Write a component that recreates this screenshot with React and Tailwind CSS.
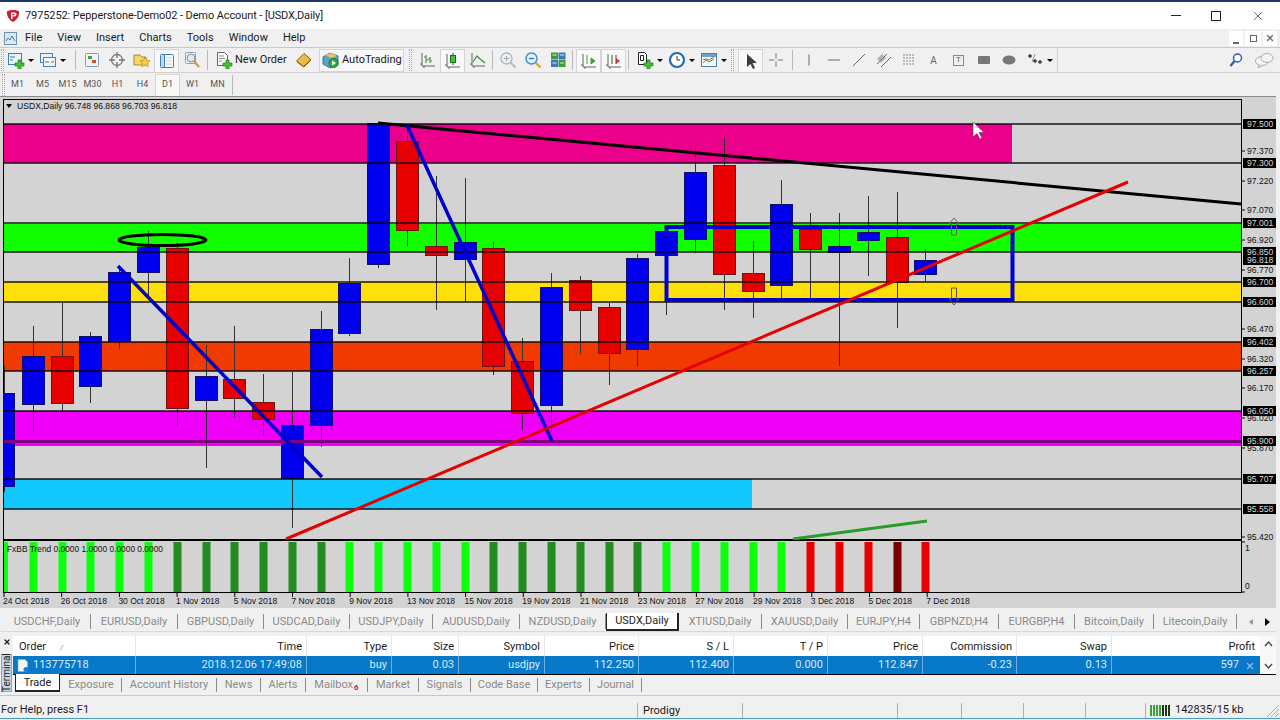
import React from 'react';
import { X } from 'lucide-react';

const B = 'blue';
const R = 'red';

// [x, color, wickTop, bodyTop, bodyBottom, wickBottom]
const candles = [
  [4, B, 366, 393, 486, 492],
  [33, B, 326, 356, 404, 432],
  [62, R, 303, 356, 403, 411],
  [90, B, 332, 336, 386, 403],
  [119, B, 267, 272, 341, 349],
  [148, B, 231, 247, 272, 297],
  [177, R, 243, 248, 408, 426],
  [206, B, 345, 376, 400, 468],
  [234, R, 326, 379, 398, 417],
  [263, R, 374, 402, 419, 436],
  [292, B, 372, 425, 478, 528],
  [321, B, 311, 329, 425, 447],
  [349, B, 258, 283, 333, 336],
  [378, B, 122, 123, 264, 268],
  [407, R, 125, 141, 230, 246],
  [436, R, 176, 246, 255, 310],
  [465, B, 178, 242, 259, 302],
  [493, R, 242, 248, 366, 375],
  [522, R, 338, 361, 413, 430],
  [551, B, 273, 287, 405, 432],
  [580, R, 276, 280, 310, 354],
  [609, R, 303, 307, 353, 385],
  [637, B, 254, 258, 349, 367],
  [666, B, 230, 231, 255, 315],
  [695, B, 146, 172, 239, 253],
  [724, R, 138, 165, 274, 310],
  [753, R, 241, 273, 291, 318],
  [781, B, 180, 204, 285, 298],
  [810, R, 213, 229, 249, 298],
  [839, B, 213, 246, 252, 366],
  [868, B, 196, 232, 240, 276],
  [897, R, 192, 237, 282, 328],
  [925, B, 249, 260, 274, 282],
];

const trendBars = [
  [5, 'l'], [33, 'l'], [62, 'l'], [90, 'l'], [119, 'l'], [148, 'l'],
  [177, 'd'], [206, 'd'], [234, 'd'], [263, 'd'], [292, 'd'], [321, 'd'],
  [349, 'l'], [378, 'l'], [407, 'l'], [436, 'l'], [465, 'l'],
  [493, 'd'], [522, 'd'], [551, 'd'], [580, 'd'], [609, 'd'], [637, 'd'],
  [666, 'l'], [695, 'l'], [724, 'l'], [753, 'l'], [781, 'l'],
  [810, 'r'], [839, 'r'], [868, 'r'], [897, 'm'], [925, 'r'],
];
const barColors = { l: '#0cff0c', d: '#228b22', r: '#e60000', m: '#7a0000' };

const dates = [
  '24 Oct 2018', '26 Oct 2018', '30 Oct 2018', '1 Nov 2018', '5 Nov 2018', '7 Nov 2018',
  '9 Nov 2018', '13 Nov 2018', '15 Nov 2018', '19 Nov 2018', '21 Nov 2018', '23 Nov 2018',
  '27 Nov 2018', '29 Nov 2018', '3 Dec 2018', '5 Dec 2018', '7 Dec 2018',
];

const plainPrices = [
  ['97.370', 151], ['97.220', 181], ['97.070', 210], ['96.920', 240], ['96.770', 270],
  ['96.470', 329], ['96.320', 359], ['96.170', 388], ['96.020', 418], ['95.870', 448], ['95.420', 537],
];
const boxedPrices = [
  ['97.500', 124], ['97.300', 163], ['97.001', 223], ['96.850', 252], ['96.818', 260], ['96.700', 282],
  ['96.600', 302], ['96.402', 342], ['96.257', 371], ['96.050', 411], ['95.900', 441], ['95.707', 479], ['95.558', 509],
];
const hLines = [124, 163, 223, 252, 282, 302, 342, 371, 411, 479, 509];

const Chart = () => (
  <svg width="1276" height="512" viewBox="0 97 1276 512" className="block" fontFamily="'Liberation Sans', sans-serif">
    <rect x="3.5" y="99.5" width="1238" height="440" fill="none" stroke="#000" />
    <text x="17" y="109" fontSize="8.6" fill="#111">USDX,Daily  96.748 96.868 96.703 96.818</text>
    <path d="M6 104h6l-3 4z" fill="#000" />

    {/* zones */}
    <rect x="4" y="124" width="1008" height="39" fill="#ea008b" />
    <rect x="4" y="224" width="1237" height="28" fill="#12ff00" />
    <rect x="4" y="282" width="1237" height="20" fill="#ffdf0a" />
    <rect x="4" y="342" width="1237" height="29" fill="#f03a00" />
    <rect x="4" y="411" width="1237" height="35" fill="#ee00f8" />
    <rect x="4" y="479" width="748" height="30" fill="#10c8fb" />

    {candles.map(([x, color, wt, bt, bb, wb]) => (
      <g key={x}>
        <line x1={x + 0.5} x2={x + 0.5} y1={wt} y2={wb} stroke="#333" />
        <rect
          x={x === 4 ? 3.5 : x - 10.5}
          y={bt + 0.5}
          width={x === 4 ? 11 : 22}
          height={bb - bt}
          fill={color === B ? '#0000ee' : '#e60000'}
          stroke={color === B ? '#10106a' : '#6e1414'}
        />
      </g>
    ))}

    {hLines.map((y) => (
      <line key={y} x1="4" x2="1241" y1={y} y2={y} stroke="#000" strokeWidth="1.5" opacity="0.9" />
    ))}
    <line x1="4" x2="1241" y1="441.5" y2="441.5" stroke="#80007f" strokeWidth="3" />

    {/* drawn objects */}
    <ellipse cx="162.5" cy="240" rx="43.5" ry="5.5" fill="none" stroke="#000" strokeWidth="3" />
    <line x1="378" y1="123" x2="1241" y2="204" stroke="#000" strokeWidth="3" />
    <line x1="118" y1="266" x2="322" y2="477" stroke="#0000c8" strokeWidth="3.5" />
    <line x1="407" y1="125" x2="552" y2="441" stroke="#0000c8" strokeWidth="3.5" />
    <rect x="666.5" y="227" width="346" height="73" fill="none" stroke="#0000d2" strokeWidth="4" />
    <line x1="286" y1="539" x2="1128" y2="182" stroke="#e60000" strokeWidth="3" />
    <line x1="793" y1="539" x2="927" y2="521" stroke="#2a9a2a" strokeWidth="3" />
    <path d="M954 218l5 6h-2.5v11h-5v-11h-2.5z" fill="none" stroke="#666" />
    <path d="M951.5 288h5v11h2.5l-5 6l-5-6h2.5z" fill="none" stroke="#555" />
    <path d="M973 122v15l4-3.500 3 5.500 2-1-3-5.500h5z" fill="#fff" stroke="#444" strokeWidth="0.6" />

    {/* indicator window */}
    <rect x="3.500" y="540.500" width="1238" height="52" fill="#d3d3d3" stroke="#000" />
    {trendBars.map(([x, c]) => (
      <rect key={x} x={x === 5 ? 4 : x - 3.5} y="542" width={x === 5 ? 4 : 8} height="50" fill={barColors[c]} />
    ))}
    <text x="7" y="552" fontSize="8.4" fill="#111">FxBB Trend 0.0000 1.0000 0.0000 0.0000</text>

    {/* price axis */}
    <line x1="1241.500" x2="1241.500" y1="99" y2="593" stroke="#000" />
    {plainPrices.map(([p, y]) => (
      <g key={p}>
        <line x1="1241" x2="1245" y1={y} y2={y} stroke="#000" />
        <text x="1247" y={y + 3} fontSize="8.600" fill="#111">{p}</text>
      </g>
    ))}
    {boxedPrices.map(([p, y]) => (
      <g key={p}>
        <rect x="1243" y={y - 5} width="33" height="10" fill="#000" />
        <text x="1247" y={y + 3} fontSize="8.600" fill="#d8d8d8">{p}</text>
      </g>
    ))}
    <text x="1245" y="551" fontSize="8.600" fill="#111">1</text>
    <text x="1245" y="589" fontSize="8.600" fill="#111">0</text>
    <line x1="1241" x2="1245" y1="542" y2="542" stroke="#000" />
    <line x1="1241" x2="1245" y1="592" y2="592" stroke="#000" />

    {/* time axis */}
    {dates.map((d, i) => {
      const x = 3 + i * 57.7;
      return (
        <g key={d}>
          <line x1={x + 1} x2={x + 1} y1="593" y2="597" stroke="#000" />
          <text x={x} y="604" fontSize="8.500" fill="#111">{d}</text>
        </g>
      );
    })}
  </svg>
);

const Plus = () => (
  <path d="M11 9h3v3h3v3h-3v3h-3v-3H8v-3h3z" fill="#41c22e" stroke="#1d7d1d" strokeWidth="0.7" />
);

const Icon = ({ children, size = 18 }) => (
  <svg width={size} height={size} viewBox="0 0 18 18" className="shrink-0">{children}</svg>
);

const Caret = () => <span className="ml-[3px] w-0 h-0 border-x-[3px] border-x-transparent border-t-[3px] border-t-black" />;

const Btn = ({ children, pressed }) => (
  <div className={`w-[25px] h-[23px] flex items-center justify-center ${pressed ? 'bg-[#f8f8f8] border-t border-x border-[#d4d4d4]' : ''}`}>
    {children}
  </div>
);

const Sep = () => <div className="w-px h-[20px] bg-[#b9b9b9]" />;
const Grip = () => <div className="w-[3px] h-[22px] border-x border-dotted border-[#aaa]" />;

const NewChartIcon = () => (
  <Icon>
    <rect x="1.500" y="2.500" width="13" height="11" fill="#eaf3fb" stroke="#3c7fa8" />
    <path d="M3 6h5M3 9h3" stroke="#3c7fa8" />
    <Plus />
  </Icon>
);
const ProfilesIcon = () => (
  <Icon>
    <rect x="1.500" y="2.500" width="12" height="9" fill="#eaf3fb" stroke="#4a7fb0" />
    <rect x="4.500" y="6.500" width="12" height="9" fill="#f4f8fc" stroke="#4a7fb0" />
    <path d="M6 11h4M12 11h3" stroke="#666" />
  </Icon>
);
const WatchIcon = () => (
  <Icon>
    <rect x="2.500" y="2.500" width="13" height="13" rx="1" fill="#eef3f8" stroke="#7e9fb8" />
    <path d="M5 5h4v3H5z" fill="#3ba53b" />
    <path d="M9 9h4v3H9z" fill="#d84a28" />
  </Icon>
);
const CrossIcon = () => (
  <Icon>
    <circle cx="9" cy="9" r="5.500" fill="none" stroke="#777" strokeWidth="1.300" />
    <path d="M9 1v6M9 11v6M1 9h6M11 9h6" stroke="#777" strokeWidth="1.300" />
  </Icon>
);
const StarFolderIcon = () => (
  <Icon>
    <path d="M1 4h6l2 2h4v8H1z" fill="#f6d468" stroke="#b08b2a" />
    <path d="M12 6l1.600 3.400 3.400.4-2.500 2.400.6 3.400-3.100-1.700-3.100 1.700.6-3.400L7 9.800l3.400-.4z" fill="#f5d33a" stroke="#a98a20" strokeWidth="0.7" />
  </Icon>
);
const PanelIcon = () => (
  <Icon>
    <rect x="2.500" y="2.500" width="13" height="13" rx="1" fill="#fff" stroke="#3d7fb5" />
    <path d="M6.500 3v12" stroke="#3d7fb5" />
    <path d="M3 3h3v12H3z" fill="#bcd9f0" />
    <path d="M8 6h6M8 9h6M8 12h6" stroke="#b8c8d8" />
  </Icon>
);
const TesterIcon = () => (
  <Icon>
    <rect x="2.500" y="1.500" width="10" height="11" rx="1" fill="#eef1f5" stroke="#8fa0b0" />
    <circle cx="8" cy="7" r="4" fill="#dfe9f2" stroke="#7f92a5" />
    <path d="M11 10l5 6" stroke="#c89a3a" strokeWidth="2" />
  </Icon>
);
const OrderIcon = () => (
  <Icon>
    <path d="M2.500 1.500h7l3 3v10h-10z" fill="#fff" stroke="#666" />
    <path d="M4 5h5M4 7.500h6M4 10h3" stroke="#889" />
    <Plus />
  </Icon>
);
const BookIcon = () => (
  <Icon>
    <path d="M1.500 10L9 2.500l7 6-7.500 7z" fill="#e9b94a" stroke="#8a6414" />
    <path d="M2 11l7 5 7-7" fill="none" stroke="#8a6414" />
  </Icon>
);
const AutoIcon = () => (
  <Icon>
    <path d="M1 6l7-4 8 3v9l-8 3-7-4z" fill="#5aa2cf" stroke="#39759c" />
    <path d="M3 4l6-2 6 3-6 2z" fill="#e9c65b" />
    <circle cx="11.500" cy="12" r="4.500" fill="#2fae3a" stroke="#1d7a28" />
    <path d="M10 9.500l4 2.500-4 2.500z" fill="#fff" />
  </Icon>
);
const Axes = () => <path d="M3 2v13h13M1 13h2M5 15v2" fill="none" stroke="#5a6a5a" />;
const BarsIcon = () => (
  <Icon><Axes /><path d="M7 4v8M7 6H5M7 9h2M11 6v6M11 8H9M11 10h2" stroke="#3a8a3a" fill="none" /></Icon>
);
const CandleIcon = () => (
  <Icon><Axes /><path d="M9 1v12" stroke="#333" /><rect x="6.500" y="3.500" width="5" height="7" fill="#3ec43e" stroke="#1d6a1d" /></Icon>
);
const LineIcon = () => (
  <Icon><Axes /><path d="M4 11l4-6 3 3 5 4" fill="none" stroke="#3a8a3a" strokeWidth="1.200" /></Icon>
);
const ZoomInIcon = () => (
  <Icon>
    <circle cx="7.500" cy="7.500" r="5.500" fill="#edf0f3" stroke="#aab2ba" strokeWidth="1.300" />
    <path d="M5 7.500h5M7.500 5v5" stroke="#a0a8b0" />
    <path d="M11.500 11.500l5 5" stroke="#c2b89a" strokeWidth="2" />
  </Icon>
);
const ZoomOutIcon = () => (
  <Icon>
    <circle cx="7.500" cy="7.500" r="5.500" fill="#dbeefb" stroke="#3b8fca" strokeWidth="1.400" />
    <path d="M5 7.500h5" stroke="#2a78b0" strokeWidth="1.200" />
    <path d="M11.500 11.500l5 5" stroke="#d6a33a" strokeWidth="2.200" />
  </Icon>
);
const TileIcon = () => (
  <Icon>
    <rect x="2" y="1.500" width="7" height="7" fill="#3c9c3c" />
    <rect x="9.500" y="1.500" width="7" height="7" fill="#3b78c8" />
    <rect x="2" y="9" width="7" height="7" fill="#3b78c8" />
    <rect x="9.500" y="9" width="7" height="7" fill="#3c9c3c" />
    <path d="M3.500 4h4M11 4h4M3.500 12h4M11 12h4" stroke="#dfeee0" />
  </Icon>
);
const ScrollIcon = () => (
  <Icon><Axes /><path d="M7 3v9M11 6l4 3-4 3z" stroke="#3aa13a" fill="#3aa13a" /></Icon>
);
const ShiftIcon = () => (
  <Icon><Axes /><path d="M7 3v9M11 3v9" stroke="#444" /><path d="M11 6l4 3-4 3z" fill="#c83a3a" /></Icon>
);
const IndicatorIcon = () => (
  <Icon>
    <path d="M2.500 1.500h6l2 2v10h-8z" fill="#fff" stroke="#222" />
    <path d="M4.500 4.500h3v5h-3z" fill="none" stroke="#222" />
    <Plus />
  </Icon>
);
const ClockIcon = () => (
  <Icon>
    <circle cx="9" cy="9" r="7" fill="#fff" stroke="#1f6fb5" strokeWidth="2.200" />
    <path d="M9 5v4h3" fill="none" stroke="#333" />
  </Icon>
);
const TemplateIcon = () => (
  <Icon>
    <rect x="1.500" y="2.500" width="15" height="13" fill="#f5f8fb" stroke="#4a7fb0" />
    <path d="M2 3h14v3H2z" fill="#6fa0c8" />
    <path d="M3 12l3-3 3 2 5-3" fill="none" stroke="#3aa13a" />
    <path d="M3 9l3-1 3 1 5-3" fill="none" stroke="#d0532f" />
  </Icon>
);
const CursorIcon = () => (
  <Icon><path d="M5 2v13l3.500-3 2.500 5 2-1-2.500-5H15z" fill="#3c3c3c" /></Icon>
);
const CrossThinIcon = () => (
  <Icon><path d="M9 2v5.500M9 10.500V16M2 9h5.500M10.500 9H16" stroke="#777" /></Icon>
);
const VLine = () => <Icon><path d="M9 3.500v11" stroke="#666" /></Icon>;
const HLine = () => <Icon><path d="M3 9h12" stroke="#666" /></Icon>;
const TLine = () => <Icon><path d="M3 15L15 3" stroke="#666" /></Icon>;
const ChannelIcon = () => (
  <Icon>
    <path d="M2 13L12 3M6 16L16 6" stroke="#666" />
    <path d="M7 3l4 4-5 5-4-4z" fill="#8a8a8a" opacity="0.6" />
  </Icon>
);
const FibIcon = () => (
  <Icon><path d="M3 4h12M3 7h12M3 10h12M3 13h12" stroke="#888" strokeDasharray="2 1" /></Icon>
);
const RectIcon = () => <Icon><rect x="3" y="5" width="12" height="8" rx="1" fill="#777" /></Icon>;
const EllipseIcon = () => <Icon><ellipse cx="9" cy="9" rx="6.500" ry="4.500" fill="#777" /></Icon>;
const ArrowsIcon = () => (
  <Icon><path d="M4 3l2 2-2 2-2-2zM9 8l2 2-2 2-2-2zM14 9l2 2-2 2-2-2zM9 3l-3 8" fill="#444" stroke="#555" strokeWidth="0.6" /></Icon>
);

const Logo = () => (
  <svg width="14" height="14" viewBox="0 0 14 14">
    <path d="M1 2.500C3 0.500 11 0.500 13 2.500c.8 4-2.500 9-6 10.500C3.500 11.500.2 6.500 1 2.500z" fill="#c8202c" />
    <path d="M5 3.500h3.200c1.500 0 2.300 .8 2.300 2s-.8 2-2.300 2H6.500V10H5z" fill="#fff" />
    <path d="M6.500 5v1.200h1.500c.5 0 .8-.2.8-.6S8.500 5 8 5z" fill="#c8202c" />
  </svg>
);

const tabs = [
  ['USDCHF,Daily', 'w-[87px]'], ['EURUSD,Daily', 'w-[87px]'], ['GBPUSD,Daily', 'w-[86px]'],
  ['USDCAD,Daily', 'w-[86px]'], ['USDJPY,Daily', 'w-[83px]'], ['AUDUSD,Daily', 'w-[87px]'],
  ['NZDUSD,Daily', 'w-[86px]'], ['USDX,Daily', 'w-[73px]', true], ['XTIUSD,Daily', 'w-[83px]'],
  ['XAUUSD,Daily', 'w-[86px]'], ['EURJPY,H4', 'w-[72px]'], ['GBPNZD,H4', 'w-[79px]'],
  ['EURGBP,H4', 'w-[76px]'], ['Bitcoin,Daily', 'w-[79px]'], ['Litecoin,Daily', 'w-[83px]'],
];

const columns = [
  ['w-[123px]', 'Order', '113775718'],
  ['w-[171px]', 'Time', '2018.12.06 17:49:08'],
  ['w-[85px]', 'Type', 'buy'],
  ['w-[67px]', 'Size', '0.03'],
  ['w-[86px]', 'Symbol', 'usdjpy'],
  ['w-[94px]', 'Price', '112.250'],
  ['w-[95px]', 'S / L', '112.400'],
  ['w-[94px]', 'T / P', '0.000'],
  ['w-[95px]', 'Price', '112.847'],
  ['w-[94px]', 'Commission', '-0.23'],
  ['w-[95px]', 'Swap', '0.13'],
];

const termTabs = [
  ['Exposure', 'w-[61px]'], ['Account History', 'w-[95px]'], ['News', 'w-[44px]'], ['Alerts', 'w-[45px]'],
  ['Mailbox', 'w-[62px]'], ['Market', 'w-[51px]'], ['Signals', 'w-[52px]'], ['Code Base', 'w-[67px]'],
  ['Experts', 'w-[52px]'], ['Journal', 'w-[52px]'],
];

const statusCells = ['w-[155px]', 'w-[64px]', 'w-[62px]', 'w-[62px]', 'w-[60px]'];

export default function App() {
  return (
    <div className="w-[1280px] h-[720px] overflow-hidden bg-[#f0f0f0] flex flex-col font-['Roboto',sans-serif] text-[#1a1a1a]">
      <div className="h-[2px] bg-[#1b3768]" />

      {/* title bar */}
      <div className="h-[27px] bg-white flex items-center pl-[6px]">
        <Logo />
        <span className="ml-[5px] text-[11px] whitespace-nowrap tracking-[-0.1px] pt-px">7975252: Pepperstone-Demo02 - Demo Account - [USDX,Daily]</span>
        <div className="ml-auto flex items-center gap-[30px] pr-[15px]">
          <div className="w-[10px] h-px bg-[#222]" />
          <div className="w-[10px] h-[10px] border border-[#222]" />
          <X size={14} strokeWidth={1.2} color="#222" />
        </div>
      </div>

      {/* menu */}
      <div className="h-[18px] flex items-center pl-[3px] text-[11px] border-b border-[#c8c8c8] box-content">
        <svg width="15" height="15" viewBox="0 0 15 15" className="mr-[7px]">
          <rect x="1.500" y="1.500" width="12" height="12" fill="#dbe9f5" stroke="#6d93b5" />
          <path d="M3 10l2-3 2 2 2-4 3 5" fill="none" stroke="#4a78a0" />
        </svg>
        <div className="flex gap-[15px]">
          <span>File</span>
          <span>View</span>
          <span>Insert</span>
          <span>Charts</span>
          <span>Tools</span>
          <span>Window</span>
          <span>Help</span>
        </div>
        <div className="ml-auto flex gap-[2px] pr-[3px] text-[#555]">
          <div className="w-[14px] h-[15px] bg-white flex items-end justify-center pb-[2px]"><div className="w-[6px] h-[2px] bg-[#666]" /></div>
          <div className="w-[16px] h-[15px] bg-white flex items-center justify-center"><div className="w-[7px] h-[7px] border border-[#666]" /></div>
          <div className="w-[14px] h-[15px] bg-white flex items-center justify-center"><X size={10} strokeWidth={3} color="#666" /></div>
        </div>
      </div>

      {/* main toolbar */}
      <div className="h-[25px] flex items-center border-b border-[#d0d0d0]">
        <div className="w-[1058px] h-[25px] flex items-center border-r border-[#d0d0d0] shrink-0">
          <div className="w-[5px] flex justify-center"><Grip /></div>
          <div className="w-[31px] flex items-center pl-[2px]"><NewChartIcon /><Caret /></div>
          <div className="w-[33px] flex items-center pl-[3px]"><ProfilesIcon /><Caret /></div>
          <div className="w-[6px]" />
          <Sep />
          <div className="w-[3px]" />
          <Btn><WatchIcon /></Btn>
          <Btn><CrossIcon /></Btn>
          <Btn><StarFolderIcon /></Btn>
          <Btn pressed><PanelIcon /></Btn>
          <Btn><TesterIcon /></Btn>
          <div className="w-[3px]" />
          <Sep />
          <div className="w-[5px]" />
          <div className="w-[78px] flex items-center text-[11px] whitespace-nowrap pl-[2px]"><OrderIcon /><span className="ml-[2px]">New Order</span></div>
          <div className="w-[26px] flex justify-center"><BookIcon /></div>
          <div className="w-[2px]" />
          <div className="w-[85px] h-[23px] flex items-center bg-[#f8f8f8] border border-[#d4d4d4] text-[11px] whitespace-nowrap pl-[2px]"><AutoIcon /><span className="ml-[2px]">AutoTrading</span></div>
          <div className="w-[5px]" />
          <Grip />
          <div className="w-[3px]" />
          <Btn><BarsIcon /></Btn>
          <Btn pressed><CandleIcon /></Btn>
          <Btn><LineIcon /></Btn>
          <div className="w-[2px]" />
          <Sep />
          <div className="w-[2px]" />
          <Btn><ZoomInIcon /></Btn>
          <Btn><ZoomOutIcon /></Btn>
          <Btn><TileIcon /></Btn>
          <div className="w-[2px]" />
          <Sep />
          <div className="w-[3px]" />
          <Btn pressed><ScrollIcon /></Btn>
          <Btn pressed><ShiftIcon /></Btn>
          <div className="w-[2px]" />
          <Sep />
          <div className="w-[3px]" />
          <div className="w-[31px] flex items-center pl-[4px]"><IndicatorIcon /><Caret /></div>
          <div className="w-[31px] flex items-center pl-[5px]"><ClockIcon /><Caret /></div>
          <div className="w-[37px] flex items-center pl-[6px]"><TemplateIcon /><Caret /></div>
          <Grip />
          <div className="w-[4px]" />
          <Btn pressed><CursorIcon /></Btn>
          <Btn><CrossThinIcon /></Btn>
          <div className="w-[4px]" />
          <Sep />
          <div className="w-[3px]" />
          <Btn><VLine /></Btn>
          <Btn><HLine /></Btn>
          <Btn><TLine /></Btn>
          <Btn><ChannelIcon /></Btn>
          <Btn><FibIcon /></Btn>
          <Btn><span className="text-[10px] text-[#666]">A</span></Btn>
          <Btn><span className="w-[11px] h-[11px] border border-[#888] flex items-center justify-center text-[8px] text-[#666]">T</span></Btn>
          <Btn><RectIcon /></Btn>
          <Btn><EllipseIcon /></Btn>
          <div className="w-[32px] flex items-center pl-[5px]"><ArrowsIcon /><Caret /></div>
        </div>
        <div className="ml-auto flex items-center gap-[10px] pr-[6px]">
          <svg width="16" height="16" viewBox="0 0 16 16">
            <circle cx="9.500" cy="6" r="4" fill="#fff" stroke="#2a5fb0" strokeWidth="1.500" />
            <path d="M6.500 9L2.500 14" stroke="#2a5fb0" strokeWidth="2.200" />
          </svg>
          <svg width="20" height="16" viewBox="0 0 20 16">
            <ellipse cx="8" cy="9" rx="6.500" ry="4.500" fill="#f4f4f4" stroke="#aaa" />
            <ellipse cx="13" cy="6" rx="6" ry="4.500" fill="#f4f4f4" stroke="#aaa" />
            <path d="M5 13l-1 3 4-2.500" fill="#f4f4f4" stroke="#aaa" />
          </svg>
        </div>
      </div>

      {/* timeframes */}
      <div className="h-[23px] flex items-center pl-[2px] text-[9px] text-[#555]">
        <Grip />
        {['M1', 'M5', 'M15', 'M30', 'H1', 'H4', 'D1', 'W1', 'MN'].map((tf) => (
          <div
            key={tf}
            className={`w-[25px] h-[22px] flex items-center justify-center ${tf === 'D1' ? 'bg-[#f8f8f8] border-t border-x border-[#d4d4d4]' : ''}`}
          >
            {tf}
          </div>
        ))}
        <div className="w-px h-[20px] ml-[2px] bg-[#b9b9b9]" />
      </div>

      {/* chart window */}
      <div className="h-[512px] bg-[#d3d3d3] w-[1276px] border-t border-[#8a8a8a] box-border overflow-hidden">
        <Chart />
      </div>

      {/* chart tabs */}
      <div className="h-[23px] flex items-center pl-[4px] pt-[4px] text-[11px] text-[#8a8a8a] whitespace-nowrap">
        {tabs.map(([name, w, active]) => (
          <div
            key={name}
            className={`${w} text-center ${
              active
                ? 'h-[18px] leading-[15px] bg-white text-[#222] border-r-2 border-b-2 border-l border-[#222]'
                : 'h-[15px] leading-[15px] border-r border-[#8a8a8a]'
            }`}
          >
            {name}
          </div>
        ))}
        <div className="ml-[12px] w-0 h-0 border-y-[3px] border-y-transparent border-r-[4px] border-r-[#999]" />
        <div className="ml-[12px] w-0 h-0 border-y-[4px] border-y-transparent border-l-[5px] border-l-black" />
      </div>

      {/* terminal */}
      <div className="h-[64px] flex border-t border-[#d8d8d8] text-[11px] w-[1276px]">
        <div className="w-[13px] flex flex-col items-center">
          <div className="h-[20px] flex items-center"><X size={8} strokeWidth={4} color="#222" /></div>
          <div className="mt-[2px] w-[11px] h-[38px] bg-[#c2d8e8] border border-[#8aa8c0] flex items-center justify-center text-[10px] leading-none text-[#222] [writing-mode:vertical-rl] rotate-180">
            Terminal
          </div>
        </div>
        <div className="flex-1 flex flex-col">
          <div className="flex mt-[4px]">
            <div className="w-[1247px]">
              <div className="h-[20px] bg-white flex">
                {columns.map(([w, head]) => (
                  <div
                    key={w + head}
                    className={`${w} h-full flex items-center border-r border-[#e6e6e6] pr-[4px] pt-[2px] ${head === 'Order' ? 'pl-[6px]' : 'justify-end'}`}
                  >
                    {head === 'Order' ? (
                      <span>Order<span className="ml-[14px] text-[#888] text-[8px] italic">/</span></span>
                    ) : head}
                  </div>
                ))}
                <div className="flex-1 flex items-center justify-end pr-[5px] pt-[2px]">Profit</div>
              </div>
              <div className="h-[18px] bg-[#0878c8] flex text-[#d9ebf8]">
                {columns.map(([w, head, val]) => (
                  <div
                    key={w + val}
                    className={`${w} h-full flex items-center border-r border-[#6db0e2] pr-[4px] pt-px ${head === 'Order' ? 'pl-[4px]' : 'justify-end'}`}
                  >
                    {head === 'Order' && (
                      <svg width="12" height="13" viewBox="0 0 12 13" className="mr-[4px]">
                        <path d="M1 .5h7l2.500 2.500v9.500H1z" fill="#f2f6fa" stroke="#9ab" strokeWidth="0.600" />
                        <circle cx="9" cy="10.500" r="2.500" fill="#1a7fd0" />
                      </svg>
                    )}
                    {val}
                  </div>
                ))}
                <div className="flex-1 flex items-center justify-end pr-[5px] pt-px">
                  <span>597</span>
                  <X size={10} strokeWidth={3} color="#8fbde0" className="ml-[6px]" />
                </div>
              </div>
            </div>
            <div className="flex-1 bg-[#f8f8f8] flex flex-col items-center pt-[5px] text-[#333]">
              <svg width="9" height="6" viewBox="0 0 9 6"><path d="M1 5l3.500-4L8 5" fill="none" stroke="#444" strokeWidth="1.300" /></svg>
              <svg width="9" height="6" viewBox="0 0 9 6" className="mt-[16px]"><path d="M1 1l3.500 4L8 1" fill="none" stroke="#444" strokeWidth="1.300" /></svg>
            </div>
          </div>
          <div className="h-[20px] flex items-start border-t border-black text-[#8a8a8a] whitespace-nowrap">
            <div className="ml-[2px] w-[45px] h-[18px] bg-white text-[#222] border-x border-b-2 border-[#222] text-center leading-[17px] -mt-px">Trade</div>
            <div className="w-[1px]" />
            {termTabs.map(([name, w]) => (
              <div key={name} className={`${w} h-[14px] mt-[3px] leading-[14px] text-center border-r border-[#8a8a8a]`}>
                {name}
                {name === 'Mailbox' && <sub className="text-[8px] text-[#d02030] font-bold ml-[1px]">6</sub>}
              </div>
            ))}
          </div>
        </div>
      </div>

      {/* status bar */}
      <div className="h-[23px] border-t border-[#c8c8c8] flex items-center pt-[7px] text-[11px]">
        <div className="w-[637px] shrink-0 pl-[1px] whitespace-nowrap">For Help, press F1</div>
        <div className="w-[105px] shrink-0 h-[16px] leading-[16px] border-l border-[#b0b0b0] pl-[5px]">Prodigy</div>
        {statusCells.map((w, i) => (
          <div key={w + i} className={`${w} shrink-0 h-[16px] border-l border-[#b0b0b0]`} />
        ))}
        <div className="h-[16px] border-l border-[#b0b0b0] flex items-center pl-[4px] whitespace-nowrap">
          <svg width="21" height="13" viewBox="0 0 21 13">
            <path d="M1 1v11M4 1v11M7 1v11M10 1v11" stroke="#3aa13a" strokeWidth="2" />
            <path d="M13 1v11M16 1v11M19 1v11" stroke="#1a3a1a" strokeWidth="2" />
          </svg>
          <span className="ml-[4px]">142835/15 kb</span>
        </div>
        <svg width="14" height="14" viewBox="0 0 14 14" className="ml-auto self-end">
          <path d="M13 1L1 13M13 5l-8 8M13 9l-4 4" stroke="#aaa" />
        </svg>
      </div>
      <div className="h-[1px] bg-[#4c9ac4]" />
    </div>
  );
}
